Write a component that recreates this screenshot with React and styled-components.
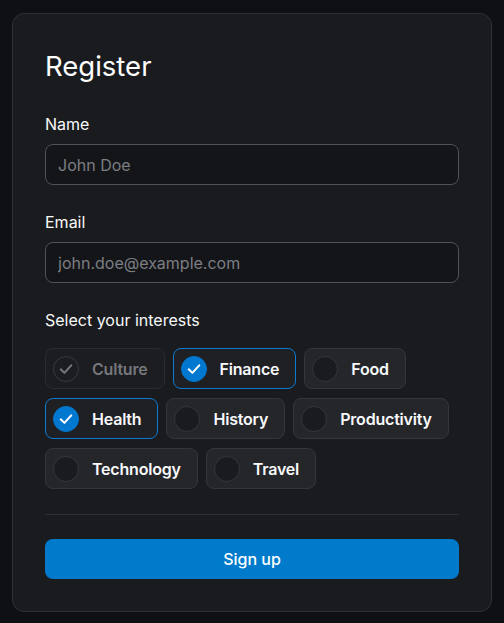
import React, { useState } from "react";
import styled, { createGlobalStyle, css } from "styled-components";

const Global = createGlobalStyle`
  html, body { margin: 0; padding: 0; background: #0f1013; }
  body {
    font-family: Inter, "Noto Sans", "Liberation Sans", sans-serif;
    color: #f1f3f5;
    padding: 13px 12px;
    -webkit-font-smoothing: antialiased;
  }
  * { box-sizing: border-box; }
`;

const Card = styled.form`
  width: 480px;
  background: #1a1b1e;
  border: 1px solid #2e3035;
  border-radius: 12px;
  padding: 32px;
  display: flex;
  flex-direction: column;
`;

const Title = styled.h1`
  margin: 0 0 27px;
  font-size: 27.5px;
  line-height: 40px;
  font-weight: 400;
  color: #ffffff;
`;

const Field = styled.div`
  display: flex;
  flex-direction: column;
  margin-bottom: ${(p) => p.$mb ?? 26}px;
`;

const Label = styled.label`
  display: block;
  font-size: 16px;
  line-height: 23px;
  font-weight: 400;
  color: #f8f9fa;
  margin-bottom: ${(p) => p.$mb ?? 8}px;
`;

const Input = styled.input`
  height: 41px;
  width: 100%;
  background: #141518;
  border: 1px solid #505257;
  border-radius: 8px;
  padding: 0 12px;
  font-family: inherit;
  font-size: 16px;
  color: #f1f3f5;
  outline: none;
  &::placeholder { color: #7c7e83; }
`;

const ChipWrap = styled.div`
  display: flex;
  flex-wrap: wrap;
  gap: 9px 8px;
`;

const Chip = styled.button`
  height: 41px;
  display: flex;
  align-items: center;
  gap: 13px;
  padding: 0 16px 0 7px;
  border-radius: 8px;
  border: 1px solid #34363c;
  background: #25262a;
  font-family: inherit;
  font-size: 16px;
  font-weight: 600;
  letter-spacing: -0.2px;
  color: #f8f9fa;
  cursor: pointer;
  ${(p) =>
    p.$checked &&
    css`
      border-color: #0b7bd0;
      background: #1f2024;
    `}
  ${(p) =>
    p.disabled &&
    css`
      background: #1c1d20;
      border-color: #2a2c30;
      color: #75777c;
      cursor: default;
    `}
`;

const Circle = styled.span`
  width: 26px;
  height: 26px;
  border-radius: 50%;
  flex: none;
  display: flex;
  align-items: center;
  justify-content: center;
  border: 1px solid #34363b;
  background: #1a1b1e;
  ${(p) =>
    p.$checked &&
    css`
      border-color: #0078cf;
      background: #0078cf;
    `}
  ${(p) =>
    p.$disabled &&
    css`
      border-color: #383a3f;
      background: #1c1d20;
    `}
`;

const Divider = styled.hr`
  margin: 25px 0 24px;
  border: 0;
  border-top: 1px solid #2e3035;
  height: 0;
`;

const Button = styled.button`
  height: 40px;
  width: 100%;
  border: 0;
  border-radius: 8px;
  background: #007bcc;
  color: #ffffff;
  font-family: inherit;
  font-size: 16px;
  font-weight: 500;
  cursor: pointer;
`;

const Check = ({ color }) => (
  <svg width="16" height="16" viewBox="0 0 14 14" fill="none">
    <path
      d="M2.4 7.3 L5.6 10.4 L11.6 3.8"
      stroke={color}
      strokeWidth="1.8"
      strokeLinecap="round"
      strokeLinejoin="round"
    />
  </svg>
);

const topics = [
  "Culture",
  "Finance",
  "Food",
  "Health",
  "History",
  "Productivity",
  "Technology",
  "Travel",
];

export default function App() {
  const [selected, setSelected] = useState(["Culture", "Finance", "Health"]);
  const toggle = (t) =>
    setSelected((s) => (s.includes(t) ? s.filter((x) => x !== t) : [...s, t]));

  return (
    <>
      <Global />
      <Card onSubmit={(e) => e.preventDefault()}>
        <Title>Register</Title>
        <Field>
          <Label htmlFor="name">Name</Label>
          <Input id="name" placeholder="John Doe" />
        </Field>
        <Field>
          <Label htmlFor="email">Email</Label>
          <Input id="email" placeholder="john.doe@example.com" />
        </Field>
        <Field $mb={0}>
          <Label $mb={16}>Select your interests</Label>
          <ChipWrap>
            {topics.map((t) => {
              const disabled = t === "Culture";
              const checked = selected.includes(t);
              return (
                <Chip
                  type="button"
                  key={t}
                  disabled={disabled}
                  $checked={checked && !disabled}
                  onClick={() => toggle(t)}
                >
                  <Circle $checked={checked && !disabled} $disabled={disabled}>
                    {checked && <Check color={disabled ? "#75777c" : "#ffffff"} />}
                  </Circle>
                  {t}
                </Chip>
              );
            })}
          </ChipWrap>
        </Field>
        <Divider />
        <Button type="submit">Sign up</Button>
      </Card>
    </>
  );
}
